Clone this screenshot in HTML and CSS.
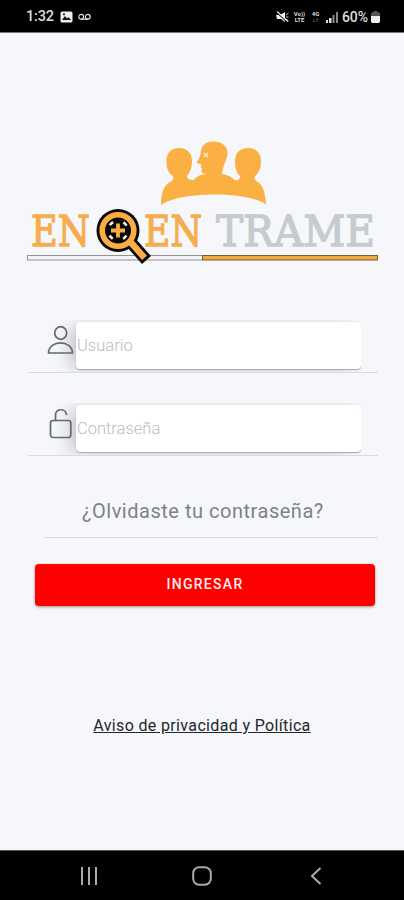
FILE: index.html
```html
<!DOCTYPE html>
<html lang="es">
<head>
<meta charset="utf-8">
<title>Enqentrame</title>
<link rel="stylesheet" href="styles.css">
</head>
<body>
<header class="status">
  <span class="clock">1:32</span>
  <svg class="photo" width="13" height="12" viewBox="0 0 13 12"><rect x=".5" y=".5" width="12" height="11" rx="1.500" fill="#eee"/><path d="M2 9l3-4 2 2.500 1.500-1.500L11 9z" fill="#111"/><circle cx="4" cy="3.300" r="1" fill="#111"/></svg>
  <svg class="voicemail" width="13" height="8" viewBox="0 0 13 8" fill="none" stroke="#ddd" stroke-width="1.200"><circle cx="3.200" cy="3.800" r="2.400"/><circle cx="9.800" cy="3.800" r="2.400"/><path d="M3 6.300h7"/></svg>
  <span class="spacer"></span>
  <svg class="mute" width="13" height="12" viewBox="0 0 13 12"><path d="M0 4h4l5-3v10L5 8H1z" fill="#eee"/><path d="M10 4l2.500-2M10 6h2.500M10 8l2.500 2" fill="none" stroke="#ccc"/><path d="M1 1.500l11 10" stroke="#000" stroke-width="1.500"/><path d="M1 .5l11 10" stroke="#eee" stroke-width="1.200"/></svg>
  <span class="net volte">Vo))<br>LTE</span>
  <span class="net lte">4G<br>↓↑</span>
  <svg class="signal" width="13" height="12" viewBox="0 0 13 12"><path d="M0 9h2v3H0zM3 7h2.500v5H3z" fill="#ddd"/><path d="M6.500 4h2v8h-2zM10 1h2v11h-2z" fill="#888"/></svg>
  <span class="percent">60%</span>
  <svg class="battery" width="9" height="12" viewBox="0 0 9 12"><path d="M3 0h3v1h1.500L9 2.500V5H0V2.500L1.500 1H3z" fill="#555"/><path d="M0 5h9v5.500L8 12H1L0 10.500z" fill="#eee"/></svg>
</header>

<main class="screen">
  <svg class="logo" width="364" height="134" viewBox="20 136 364 134">
    <path fill="#fbb044" d="M161 205C161 195 163 185 171 181.500C173 180.500 174 179 173 176C167 172 166.500 166 166.500 161C166.500 153 171 148 179 148C187 148 192 153 192 161C192 167 190 173 187 176C187 179 190 180 194 180C197 176 200 174.500 207 174C204 173.500 201.500 174 201.500 171L202 168.500L200.500 167L201.500 164.500L197 163C197 161 200 158 200.500 154C201 145 206 141.500 213 141.500C222 141.500 227.500 146 227.500 153C227.500 160 223 164 222 174C228 175 232 177 234.500 180C238 181 240 179.500 240 176C236 173 235 166 235 161C235 153 240 148 248 148C256 148 261 153 261 161C261 168 259 173 255 176C254 180 256 181 258 182C264 186 265.500 196 266 204.500C248 191 180 191 161 205Z"/>
    <path d="M204 153l4 4M208 153l-4 4" stroke="#fff0d8" stroke-width="1.300"/>
    <g class="wordmark">
      <text class="orange" x="31" y="246" textLength="59" lengthAdjust="spacingAndGlyphs">EN</text>
      <text class="orange" x="144" y="246" textLength="58" lengthAdjust="spacingAndGlyphs">EN</text>
      <text class="gray" x="216" y="246" textLength="159" lengthAdjust="spacingAndGlyphs">TRAME</text>
    </g>
    <rect x="27.500" y="255.500" width="175" height="4.500" fill="#f4f4f6" stroke="#929294"/>
    <rect x="202.500" y="255.500" width="175" height="4.500" fill="#f5a83b" stroke="#715f40"/>
    <path d="M130.500 242L146.500 260" stroke="#080808" stroke-width="12"/>
    <circle cx="118" cy="230.500" r="21.500" fill="#080808"/>
    <circle cx="118" cy="230.500" r="15.800" fill="none" stroke="#fbad43" stroke-width="5.600"/>
    <path d="M130 241.500L144.500 257.800" stroke="#fbad43" stroke-width="6.500"/>
    <circle cx="118" cy="230.500" r="9.800" fill="none" stroke="#f8f1e5" stroke-width="2.600" stroke-dasharray="4.500 10.894" stroke-dashoffset="-5.450"/>
    <path d="M118 223.500v14M111 230.500h14" stroke="#fbad43" stroke-width="3.800"/>
  </svg>

  <form class="login">
    <label class="field">
      <svg class="icon" width="28" height="31" viewBox="0 0 28 31" fill="none" stroke="#66686b" stroke-width="1.700"><ellipse cx="14.700" cy="8" rx="6" ry="6.300"/><path d="M2.500 28C3 14.500 26 14.500 26.500 28Z" stroke-linejoin="round"/></svg>
      <input type="text" placeholder="Usuario">
    </label>
    <label class="field">
      <svg class="icon" width="28" height="31" viewBox="0 0 28 31" fill="none" stroke="#66686b" stroke-width="1.700"><rect x="4.500" y="12.500" width="20.300" height="17" rx="2.500"/><path d="M9.500 12.500V7.500C9.500 0 19.500 0 20.500 6.500" stroke-linecap="round"/></svg>
      <input type="text" placeholder="Contraseña">
    </label>
    <a class="forgot"><span>¿Olvidaste tu contraseña?</span></a>
    <button class="submit" type="button">INGRESAR</button>
  </form>
  <a class="privacy"><span>Aviso de privacidad y Política</span></a>
</main>

<nav class="navbar">
  <svg width="18" height="20" viewBox="0 0 18 20" stroke="#aaa" stroke-width="2"><path d="M2 1v18M9 1v18M16 1v18"/></svg>
  <svg class="home" width="20" height="20" viewBox="0 0 20 20" fill="none" stroke="#aaa" stroke-width="2"><rect x="1.200" y="1.200" width="17.600" height="17.600" rx="6"/></svg>
  <svg width="12" height="20" viewBox="0 0 12 20" fill="none" stroke="#aaa" stroke-width="2"><path d="M10.500 2L2 10l8.500 8"/></svg>
</nav>
</body>
</html>
```
FILE: styles.css
```css
* { box-sizing: border-box; }
body {
  margin: 0;
  width: 404px;
  height: 900px;
  display: flex;
  flex-direction: column;
  overflow: hidden;
  background: #f5f7fb;
  font-family: Roboto, "Liberation Sans", sans-serif;
}
svg { display: block; flex: none; }
.status {
  flex: none;
  height: 33px;
  padding: 1px 24px 0 26px;
  display: flex;
  align-items: center;
  background: #000;
  border-bottom: 1px solid #77787a;
  color: #ddd;
}
.clock { width: 34px; font-size: 14.500px; font-weight: 500; letter-spacing: -.2px; }
.voicemail { margin-left: 5px; }
.spacer { flex: 1; }
.net { font-size: 6px; line-height: 6px; font-weight: 700; text-align: center; }
.volte { width: 13px; margin-left: 4px; }
.lte { width: 11px; margin-left: 4px; }
.signal { margin-left: 5px; }
.percent { width: 28px; margin-left: 3px; font-size: 14px; font-weight: 500; letter-spacing: -.1px; }
.battery { margin-left: 1px; }

.screen { flex: 1; min-height: 0; padding-top: 103px; }
.logo { margin-left: 20px; }
.wordmark { font-family: "DejaVu Serif", serif; font-size: 42.500px; stroke-width: 1.300px; }
.orange { fill: #f5ad4d; stroke: #f5ad4d; }
.gray { fill: #c8cbcb; stroke: #c8cbcb; }
.login { display: flex; flex-direction: column; margin-top: 51px; }
.field {
  height: 52px;
  margin: 0 26px 31px 28px;
  padding-left: 18px;
  display: flex;
  border-bottom: 1px solid #d9dbdf;
}
.icon { position: relative; z-index: 1; margin-top: 4px; }
.field input {
  width: 285px;
  height: 47px;
  margin: 1px 0 0 2px;
  padding: 0 1px;
  border: 0;
  border-radius: 4px;
  background: #fff;
  box-shadow: 0 1px 1px #a5a7aa, -10px 2px 16px -3px #c6c8cc, 0 -1px 1px #eceef0;
  clip-path: inset(-2px 0 -3px -32px);
  font: 300 16.500px Roboto, sans-serif;
}
.field input::placeholder { color: #bcbcbc; opacity: 1; }
.forgot {
  height: 51px;
  margin: 0 26px 0 44px;
  padding: 12px 0 0 38px;
  border-bottom: 1px solid #d8dade;
  color: #7f8285;
  font-size: 20px;
  line-height: 24px;
  letter-spacing: .52px;
  white-space: nowrap;
}
.submit {
  height: 42px;
  margin: 25.500px 29px 0 35px;
  padding: 0 0 2px;
  border: 0;
  border-radius: 4px;
  background: #fe0000;
  box-shadow: 0 1px 3px #998f91;
  color: #ffecec;
  font: 500 14px Roboto, sans-serif;
  letter-spacing: 1.300px;
}
.privacy {
  display: block;
  margin-top: 110.500px;
  text-align: center;
  color: #242629;
  font-size: 16px;
  line-height: 20px;
  letter-spacing: .35px;
  text-decoration: underline;
}
.navbar {
  flex: none;
  height: 50px;
  padding: 1px 82px 0 80px;
  display: flex;
  align-items: center;
  justify-content: space-between;
  background: #000;
  border-top: 1px solid #555658;
}
.home { margin-right: 4px; }
```
